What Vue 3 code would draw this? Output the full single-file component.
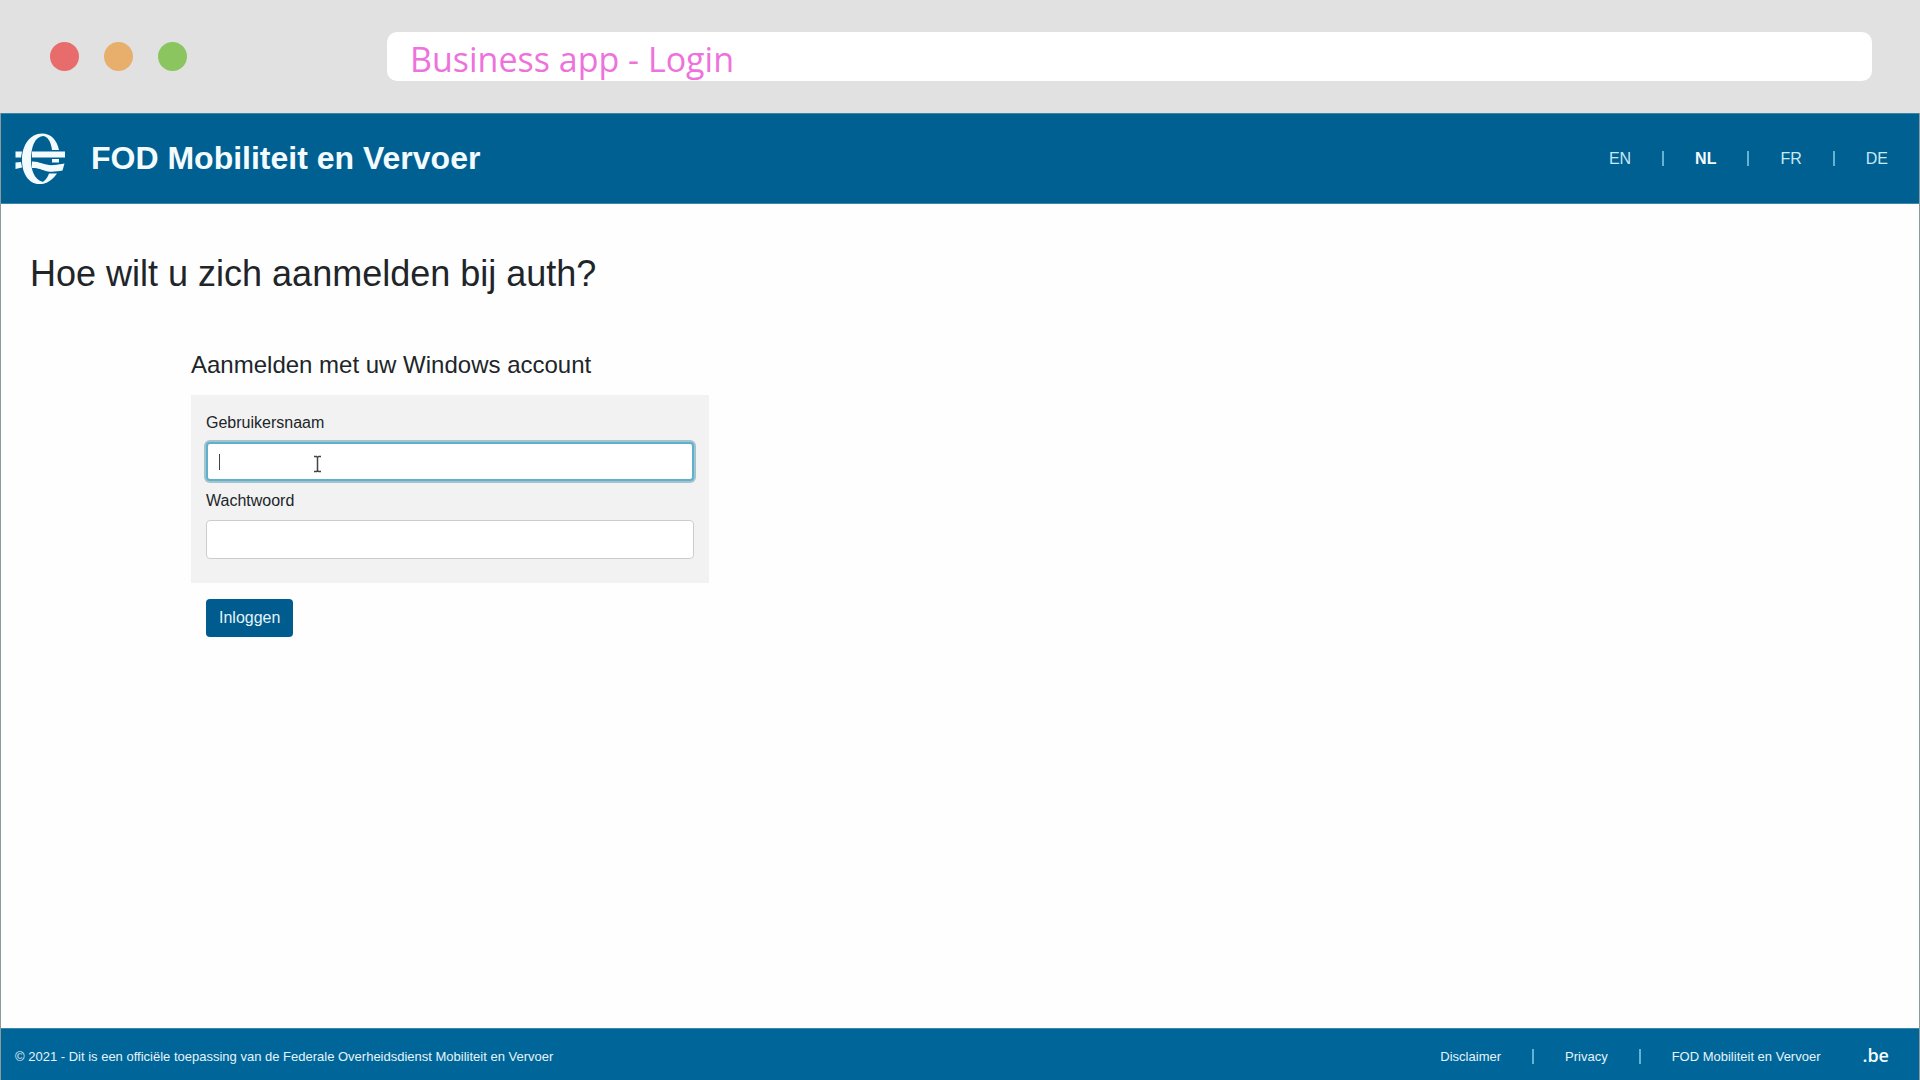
<script setup>
import { ref } from 'vue'

const username = ref('')
const password = ref('')
const languages = [
  { code: 'EN', active: false },
  { code: 'NL', active: true },
  { code: 'FR', active: false },
  { code: 'DE', active: false },
]
const footerLinks = ['Disclaimer', 'Privacy', 'FOD Mobiliteit en Vervoer']
</script>

<template>
  <div class="window">
    <div class="chrome">
      <div class="dots">
        <span class="dot red"></span>
        <span class="dot orange"></span>
        <span class="dot green"></span>
      </div>
      <div class="address">Business app - Login</div>
    </div>

    <div class="page">
      <header class="header">
        <svg class="logo" viewBox="0 0 50 52" aria-hidden="true">
          <g fill="#f4fbff">
            <path d="M0.5 18.500H7L6 24.500H0.5Z" />
            <path d="M0.5 29.500L6 29L7 34.500L0.5 36Z" />
            <path d="M27 0.500C15 0.500 7 12 7 27C7 41 14 51 24 51C27 51 30 50.500 32 49C22 50 16 41 16 27C16 13 20 4 28 3C32 3 36 8 37 17H44C42 7 36 0.500 27 0.500Z" />
            <path d="M17 18.500H50V24.500H17Z" />
            <path d="M37 26H44V29.500H37Z" />
            <path d="M17 28.500C24 28 30 33 39 32C43 31.500 46 31 49.500 30.500L47.500 37.500C43 38.500 38 39 33 38.500C26 36.500 22 34.500 17 35Z" />
            <path d="M34 40.500H42C38 46 33 51 24 51C29 49 32 46 34 40.500Z" />
          </g>
        </svg>
        <div class="brand">FOD Mobiliteit en Vervoer</div>
        <nav class="languages">
          <template v-for="(lang, i) in languages" :key="lang.code">
            <span v-if="i" class="bar"></span>
            <a href="#" :class="{ active: lang.active }">{{ lang.code }}</a>
          </template>
        </nav>
      </header>

      <main class="main">
        <h1>Hoe wilt u zich aanmelden bij auth?</h1>
        <form class="login" @submit.prevent>
          <h2>Aanmelden met uw Windows account</h2>
          <div class="fields">
            <label for="username">Gebruikersnaam</label>
            <div class="field">
              <input id="username" v-model="username" class="focused" type="text" autocomplete="off" />
              <span class="caret"></span>
              <svg class="pointer" viewBox="0 0 9 18" aria-hidden="true">
                <path d="M1 1.500H3.500L4.500 2.500L5.500 1.500H8M4.500 2.500V15.500M1 16.500H3.500L4.500 15.500L5.500 16.500H8" fill="none" stroke="#444" stroke-width="1.500" />
              </svg>
            </div>
            <label for="password">Wachtwoord</label>
            <div class="field">
              <input id="password" v-model="password" type="password" autocomplete="off" />
            </div>
          </div>
          <button type="submit">Inloggen</button>
        </form>
      </main>

      <footer class="footer">
        <span>© 2021 - Dit is een officiële toepassing van de Federale Overheidsdienst Mobiliteit en Vervoer</span>
        <nav class="footer-links">
          <template v-for="(link, i) in footerLinks" :key="link">
            <span v-if="i" class="bar"></span>
            <a href="#">{{ link }}</a>
          </template>
        </nav>
        <a class="be" href="#">.be</a>
      </footer>
    </div>
  </div>
</template>

<style>
body {
  margin: 0;
}
</style>

<style scoped>
* {
  box-sizing: border-box;
}

.window {
  display: flex;
  flex-direction: column;
  min-height: 100vh;
  font-family: "Liberation Sans", Arial, sans-serif;
  font-size: 16px;
  color: #212529;
  background: #fefefe;
}

.chrome {
  display: flex;
  align-items: center;
  height: 113px;
  padding: 0 48px 0 50px;
  background: #e1e1e1;
}

.dots {
  display: flex;
  gap: 25px;
  width: 337px;
}

.dot {
  width: 29px;
  height: 29px;
  border-radius: 50%;
}

.red {
  background: #e86c6c;
}

.orange {
  background: #e8af6c;
}

.green {
  background: #8ac55f;
}

.address {
  flex: 1;
  height: 49px;
  padding: 3px 23px 0;
  border-radius: 10px;
  background: #fff;
  color: #ee72dc;
  font-family: "Open Sans", sans-serif;
  font-size: 34px;
  line-height: 49px;
}

.page {
  flex: 1;
  display: flex;
  flex-direction: column;
  border: solid #8f9a9f;
  border-width: 0 1px;
}

.header {
  display: flex;
  align-items: center;
  height: 91px;
  padding: 0 31px 0 14px;
  border: solid #3d87a6;
  border-width: 1px 0;
  background: #006092;
  color: #f4fbff;
}

.logo {
  width: 50px;
  height: 52px;
}

.brand {
  flex: 1;
  margin-left: 26px;
  font-size: 32px;
  font-weight: bold;
}

a {
  color: inherit;
  text-decoration: none;
}

.languages,
.footer-links {
  display: flex;
  align-items: center;
  gap: 31px;
}

.languages {
  color: #c8e8f4;
}

.active {
  color: #f4fbff;
  font-weight: bold;
}

.bar {
  width: 2px;
  height: 15px;
  background: #65b3d3;
}

.main {
  flex: 1;
  padding: 48px 29px;
}

h1,
h2 {
  margin: 0;
  font-weight: normal;
}

h1 {
  font-size: 36px;
  line-height: 44px;
}

.login {
  width: 518px;
  margin: 54px 0 0 161px;
}

h2 {
  font-size: 24px;
  line-height: 30px;
}

.fields {
  margin-top: 15px;
  padding: 15px 15px 24px;
  background: #f2f2f2;
}

label {
  display: block;
  line-height: 26px;
}

.field {
  position: relative;
  margin: 6px 0 7px;
}

.field:last-child {
  margin-bottom: 0;
}

input {
  display: block;
  width: 100%;
  height: 39px;
  padding: 0 12px;
  border: 1px solid #ccc;
  border-radius: 4px;
  outline: none;
  background: #fff;
  font: inherit;
}

.focused {
  border: 2px solid #5fb0ca;
  box-shadow: 0 0 0 2px #a3c3d1;
}

.caret {
  position: absolute;
  top: 12px;
  left: 13px;
  width: 1px;
  height: 16px;
  background: #444;
}

.pointer {
  position: absolute;
  top: 13px;
  left: 107px;
  width: 9px;
  height: 18px;
}

button {
  display: block;
  height: 38px;
  margin: 16px 0 0 15px;
  padding: 0 13px;
  border: 0;
  border-radius: 4px;
  background: #005c8e;
  color: #e4f4fa;
  font: inherit;
}

.footer {
  display: flex;
  align-items: center;
  height: 52px;
  padding: 3px 30px 0 14px;
  border-top: 1px solid #3d87a6;
  background: #006699;
  color: #e4f4fa;
  font-size: 13px;
}

.footer-links {
  margin-left: auto;
}

.be {
  margin-left: 42px;
  padding-bottom: 3px;
  color: #f4fbff;
  font-family: "Open Sans", sans-serif;
  font-size: 18px;
  font-weight: 600;
  line-height: 24px;
}
</style>
